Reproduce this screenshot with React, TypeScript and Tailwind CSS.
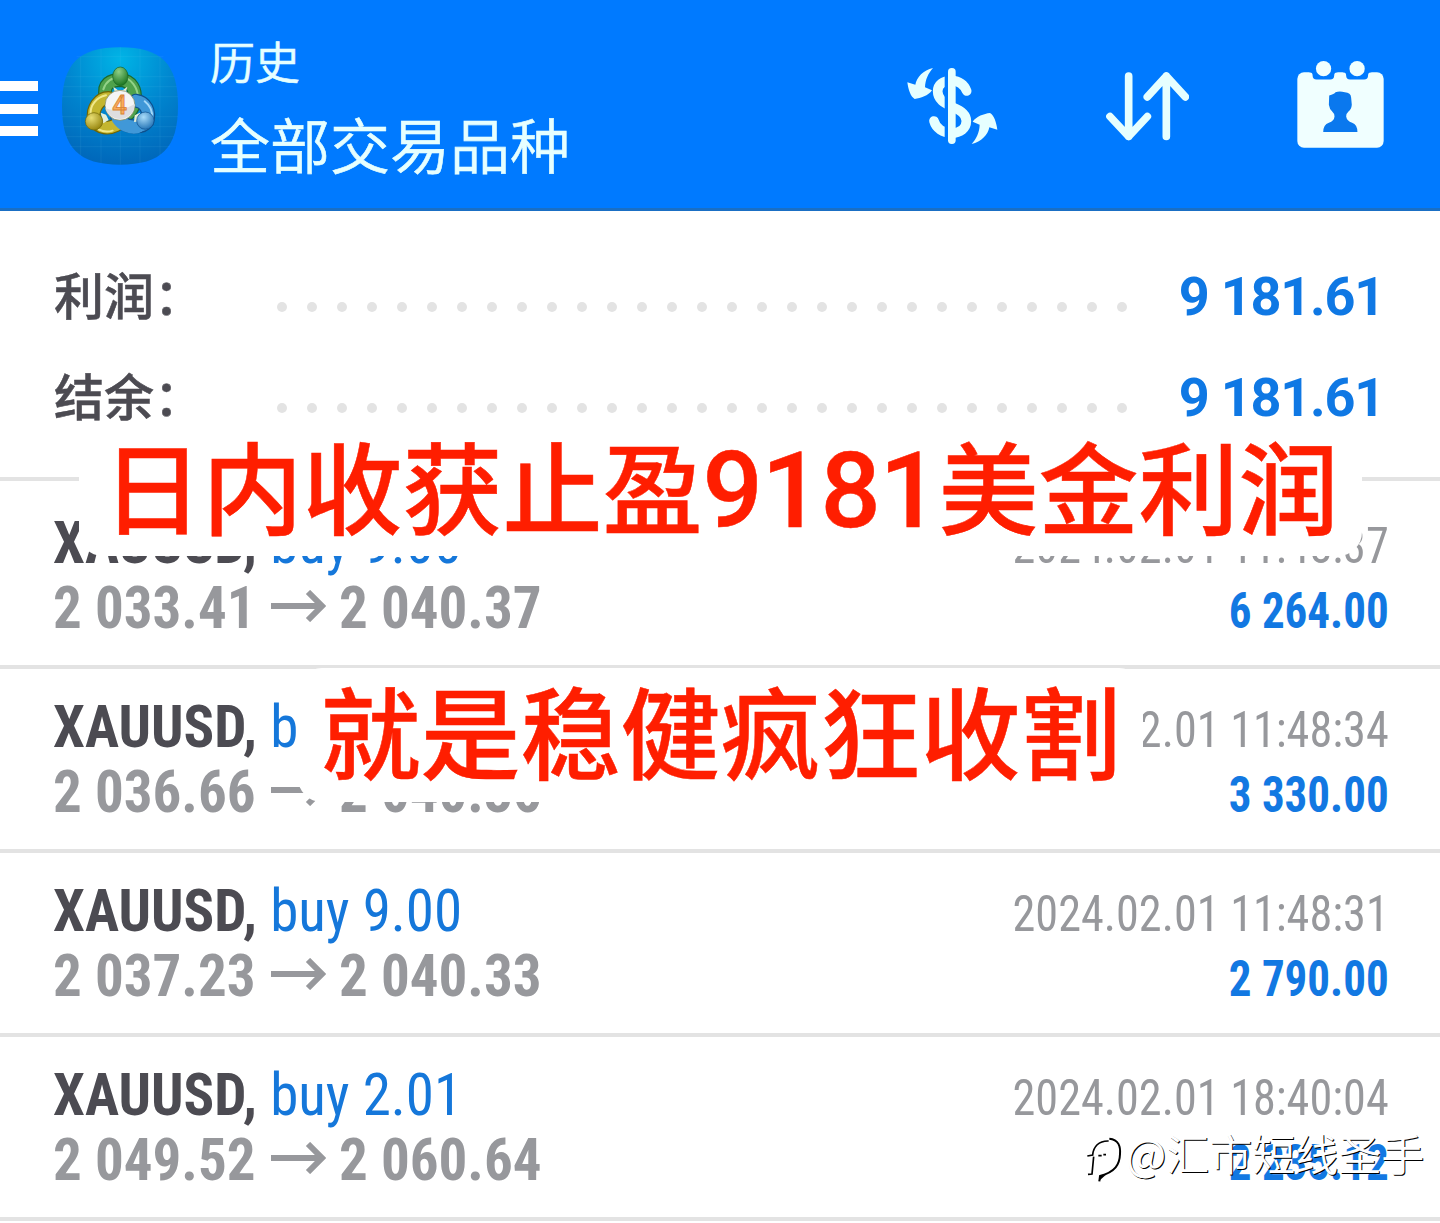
import React from 'react';
import { clsx } from 'clsx';

interface Deal {
  symbol: string;
  side: string;
  open: string;
  close: string;
  time: string;
  profit: string;
}

const deals: Deal[] = [
  { symbol: 'XAUUSD', side: 'buy 9.00', open: '2 033.41', close: '2 040.37', time: '2024.02.01 11:48:37', profit: '6 264.00' },
  { symbol: 'XAUUSD', side: 'buy 9.00', open: '2 036.66', close: '2 040.36', time: '2024.02.01 11:48:34', profit: '3 330.00' },
  { symbol: 'XAUUSD', side: 'buy 9.00', open: '2 037.23', close: '2 040.33', time: '2024.02.01 11:48:31', profit: '2 790.00' },
  { symbol: 'XAUUSD', side: 'buy 2.01', open: '2 049.52', close: '2 060.64', time: '2024.02.01 18:40:04', profit: '2 235.12' },
];

const summary = [
  { label: '利润：', value: '9 181.61' },
  { label: '结余：', value: '9 181.61' },
];

const AppLogo: React.FC = () => (
  <svg viewBox="36 22 348 352" className="h-[118px] w-[116px] shrink-0">
    <defs>
      <radialGradient id="tile" cx="0.5" cy="0.1" r="0.95">
        <stop offset="0" stopColor="#00b4e6" />
        <stop offset="0.5" stopColor="#0085cf" />
        <stop offset="1" stopColor="#0064b8" />
      </radialGradient>
      <radialGradient id="green" cx="0.4" cy="0.25" r="0.8">
        <stop offset="0" stopColor="#8fcf86" />
        <stop offset="1" stopColor="#14701a" />
      </radialGradient>
      <radialGradient id="yellow" cx="0.35" cy="0.3" r="0.8">
        <stop offset="0" stopColor="#e8de74" />
        <stop offset="1" stopColor="#8f7d05" />
      </radialGradient>
      <radialGradient id="blue" cx="0.4" cy="0.3" r="0.8">
        <stop offset="0" stopColor="#a9dcfa" />
        <stop offset="1" stopColor="#1568ae" />
      </radialGradient>
    </defs>
    <path d="M210 22C334 22 384 72 384 198S334 374 210 374 36 324 36 198 86 22 210 22Z" fill="url(#tile)" />
    <g stroke="#7fd4f5" strokeOpacity="0.14" strokeWidth="2">
      <path d="M92 50V346M153 26V370M211 22V374M270 26V370M330 50V346" />
      <path d="M80 50H340M48 110H372M40 140H380M36 170H384M36 230H384M40 260H380M48 290H372M60 320H360" />
    </g>
    <g fill="none" strokeLinecap="round">
      <path d="M168 172C156 130 185 120 211 120C245 122 258 150 254 180C252 198 246 208 236 220" stroke="#1c6a2a" strokeWidth="42" />
      <path d="M168 172C156 130 185 120 211 120C245 122 258 150 254 180C252 198 246 208 236 220" stroke="#4fa24c" strokeWidth="35" />
      <path d="M160 148C170 118 190 112 211 112C245 112 264 145 264 175" stroke="#93d287" strokeWidth="6" />
      <path d="M258 182C288 186 300 215 292 244C276 268 222 264 202 234" stroke="#0d4f8c" strokeWidth="42" />
      <path d="M258 182C288 186 300 215 292 244C276 268 222 264 202 234" stroke="#4098d8" strokeWidth="35" />
      <path d="M284 184C302 198 308 214 306 234M212 256C230 272 250 276 272 272" stroke="#a4d8f8" strokeWidth="6" />
      <path d="M176 174C148 174 126 204 132 238C148 268 178 266 198 256" stroke="#6e6404" strokeWidth="42" />
      <path d="M176 174C148 174 126 204 132 238C148 268 178 266 198 256" stroke="#c4b62f" strokeWidth="35" />
      <path d="M168 166C138 172 120 198 122 222M146 268C160 276 175 276 188 272" stroke="#f0e88a" strokeWidth="6" />
      <path d="M202 238C216 258 238 268 262 264" stroke="#4098d8" strokeWidth="32" />
    </g>
    <path d="M190 140L203 150H219L232 140L226 162H196ZM152 218L168 224L176 240L160 250ZM254 226L270 218L272 244L252 246Z" fill="#e3efda" />
    <ellipse cx="211" cy="109" rx="23" ry="28" fill="url(#green)" stroke="#176024" strokeWidth="2" />
    <circle cx="132" cy="244" r="26" fill="url(#yellow)" stroke="#6e6404" strokeWidth="2" />
    <circle cx="286" cy="242" r="26" fill="url(#blue)" stroke="#0d4f8c" strokeWidth="2" />
    <circle cx="210" cy="196" r="45" fill="#f5f5f5" stroke="#77804f" strokeWidth="2" />
    <path d="M166 205Q205 220 254 192A45 45 0 0 1 166 205Z" fill="#dedee0" />
    <text x="209" y="223" textAnchor="middle" fontSize="78" fill="#fbab5c" stroke="#d98434" strokeWidth="2.5" className="font-[Roboto] font-medium">
      4
    </text>
  </svg>
);

const CurrencyIcon: React.FC = () => (
  <svg viewBox="48 48 276 240" className="h-20 w-[92px]" fill="#e6ffff">
    <path
      d="M230 123C222 103 205 93 185 92C158 92 143 105 143 124C143 150 165 160 188 172C215 182 229 193 229 213C229 236 210 249 185 249C158 248 138 235 132 213"
      fill="none"
      stroke="#e6ffff"
      strokeWidth="29"
      strokeLinecap="round"
    />
    <path d="M164 60H176V276H164Z" fill="#007aff" />
    <rect x="174" y="54" width="23" height="228" rx="11" />
    <path d="M129 54C100 60 80 82 76 104L52 97C55 120 62 140 74 147C92 145 115 137 126 121L105 112C106 88 115 70 129 54Z" />
    <path
      d="M129 54C100 60 80 82 76 104L52 97C55 120 62 140 74 147C92 145 115 137 126 121L105 112C106 88 115 70 129 54Z"
      transform="rotate(180 187 168)"
    />
  </svg>
);

const SortIcon: React.FC = () => (
  <svg viewBox="47 65 249 206" className="h-[69px] w-[83px]" fill="none" stroke="#e6ffff" strokeWidth="23" strokeLinecap="round" strokeLinejoin="round">
    <path d="M115 77V258M59 198L115 258L171 198" />
    <path d="M228 258V77M171 139L228 77L285 139" />
  </svg>
);

const CalendarIcon: React.FC = () => (
  <svg viewBox="620 32 262 262" className="size-[87px]" fill="#f0ffff">
    <rect x="621" y="66" width="260" height="227" rx="20" />
    <path d="M657 60V66Q667 66 667 76Q667 88 679 88H720Q732 88 732 76Q732 66 742 66V60ZM758 60V66Q768 66 768 76Q768 88 780 88H822Q834 88 834 76Q834 66 844 66V60Z" fill="#007aff" />
    <circle cx="700" cy="55" r="23" />
    <circle cx="801" cy="55" r="23" />
    <path
      d="M717 136Q732 132 736 126Q748 121 764 126Q782 127 783 142L785 164Q784 178 775 184Q768 190 768 199Q770 212 786 218Q802 224 802 246H699Q699 224 716 218Q732 212 733 199Q733 190 726 184Q718 178 716 164Z"
      fill="#0a78ee"
    />
  </svg>
);

const PriceArrow: React.FC = () => (
  <svg viewBox="0 0 55 32" className="-mt-[3px] h-8 w-[55px]" fill="none" stroke="#97989c" strokeWidth="6">
    <path d="M0 16H50M37 2L51 16L37 30" />
  </svg>
);

const Header: React.FC = () => (
  <header className="flex h-[211px] items-start border-b-3 border-[#1a6fc4] bg-[#007aff]">
    <div className="mt-[81px] flex w-[38px] flex-col gap-[12.5px]">
      <span className="h-[10px] bg-white" />
      <span className="h-[10px] bg-white" />
      <span className="h-[10px] bg-white" />
    </div>
    <div className="mt-[47px] ml-6">
      <AppLogo />
    </div>
    <div className="mt-7 ml-8 flex flex-1 flex-col font-['Noto_Sans_CJK_SC',sans-serif] [font-weight:350] text-[#e6ffff] [-webkit-text-stroke:0.6px_#e6ffff]">
      <span className="text-[45px] leading-[65px]">历史</span>
      <span className="text-[60px] leading-[99px]">全部交易品种</span>
    </div>
    <div className="mt-[61px] mr-14 flex items-start">
      <div className="mt-[5px] mr-[108px]">
        <CurrencyIcon />
      </div>
      <div className="mt-[11px] mr-[108px]">
        <SortIcon />
      </div>
      <CalendarIcon />
    </div>
  </header>
);

const SummaryRow: React.FC<{ label: string; value: string }> = ({ label, value }) => (
  <div className="flex h-[101px] items-center pr-14 pl-[54px]">
    <span className="w-[222.5px] pb-[10px] font-['Noto_Sans_CJK_SC',sans-serif] text-[50px] leading-none font-medium text-[#4c4b52] [-webkit-text-stroke:0.5px_#4c4b52]">
      {label}
    </span>
    <div className="mt-[18px] flex gap-5">
      {Array.from({ length: 29 }, (_, i) => (
        <span key={i} className="size-[10px] rounded-full bg-[#e3e3e3]" />
      ))}
    </div>
    <span className="ml-auto pb-px font-[Roboto] text-[54px] leading-none font-bold tracking-[-1.2px] text-[#0f78e4]">{value}</span>
  </div>
);

const DealRow: React.FC<{ deal: Deal; first?: boolean }> = ({ deal, first }) => (
  <div
    className={clsx(
      "border-b-4 border-[#e3e3e3] pr-[51px] pb-[25px] pl-[53px] font-['Roboto_Condensed']",
      first ? 'pt-[29px]' : 'pt-[25px]'
    )}
  >
    <div className="flex h-[65px] items-baseline justify-between leading-[65px]">
      <div className="origin-left scale-x-[0.95] text-[60px] font-bold whitespace-pre text-[#4c4b52]">
        {deal.symbol}, <span className="[font-weight:450] text-[#1577da]">{deal.side}</span>
      </div>
      <span className="origin-right scale-x-[0.925] text-[50px] [font-weight:430] text-[#97989c]">{deal.time}</span>
    </div>
    <div className="flex h-[65px] items-baseline justify-between leading-[65px]">
      <div className="flex items-center text-[60px] font-bold text-[#97989c]">
        <span className="w-[218px] origin-left scale-x-[0.95]">{deal.open}</span>
        <PriceArrow />
        <span className="ml-[13px] origin-left scale-x-[0.95]">{deal.close}</span>
      </div>
      <span className="origin-right scale-x-[0.9] text-[50px] font-bold text-[#1278e2]">{deal.profit}</span>
    </div>
  </div>
);

const Caption: React.FC<{ className?: string; children: React.ReactNode }> = ({ className, children }) => (
  <div
    className={clsx(
      "absolute flex items-center justify-center rounded-[24px] bg-white font-['Noto_Sans_CJK_SC',sans-serif] text-[100px] leading-none font-medium whitespace-nowrap text-[#ff1e00] [-webkit-text-stroke:0.5px_#ff1e00]",
      className
    )}
  >
    <p>{children}</p>
  </div>
);

const Watermark: React.FC = () => (
  <div className="absolute top-[1122px] left-[1082px] flex items-center">
    <svg viewBox="68 224 120 144" className="mt-[12px] h-12 w-10" fill="none" stroke="#000" strokeWidth="5">
      <path d="M84 290L100 287C102 262 118 244 148 245" />
      <path d="M117 289H127M132 286H140M103 292L98 344L86 345" />
      <path d="M150 238C178 240 184 262 182 285C181 315 168 338 122 350L120 366" strokeWidth="6" />
      <path d="M118 366L122 350L140 346Z" fill="#000" stroke="none" />
    </svg>
    <span className="ml-1 font-['Noto_Sans_CJK_SC',sans-serif] text-[43px] leading-[50px] [font-weight:350] text-white [text-shadow:1px_1px_0.5px_#000]">
      @汇市短线圣手
    </span>
  </div>
);

export default function App() {
  return (
    <div className="relative h-[1223px] w-[1440px] overflow-hidden bg-white">
      <Header />
      <section className="h-[270px] border-b-4 border-[#e3e3e3] pt-9">
        {summary.map((row) => (
          <SummaryRow key={row.label} {...row} />
        ))}
      </section>
      <main>
        {deals.map((deal, i) => (
          <DealRow key={deal.time} deal={deal} first={i === 0} />
        ))}
      </main>

      <Caption className="top-[424px] left-[79px] h-[132px] w-[1283px] pb-0.5">
        日内收获止盈<span className="font-[Roboto] text-[106px] tracking-[-1.3px]">9181</span>美金利润
      </Caption>
      <Caption className="top-[668px] left-[298px] h-[134px] w-[845px] pb-[13px]">就是稳健疯狂收割</Caption>
      <Watermark />
    </div>
  );
}
